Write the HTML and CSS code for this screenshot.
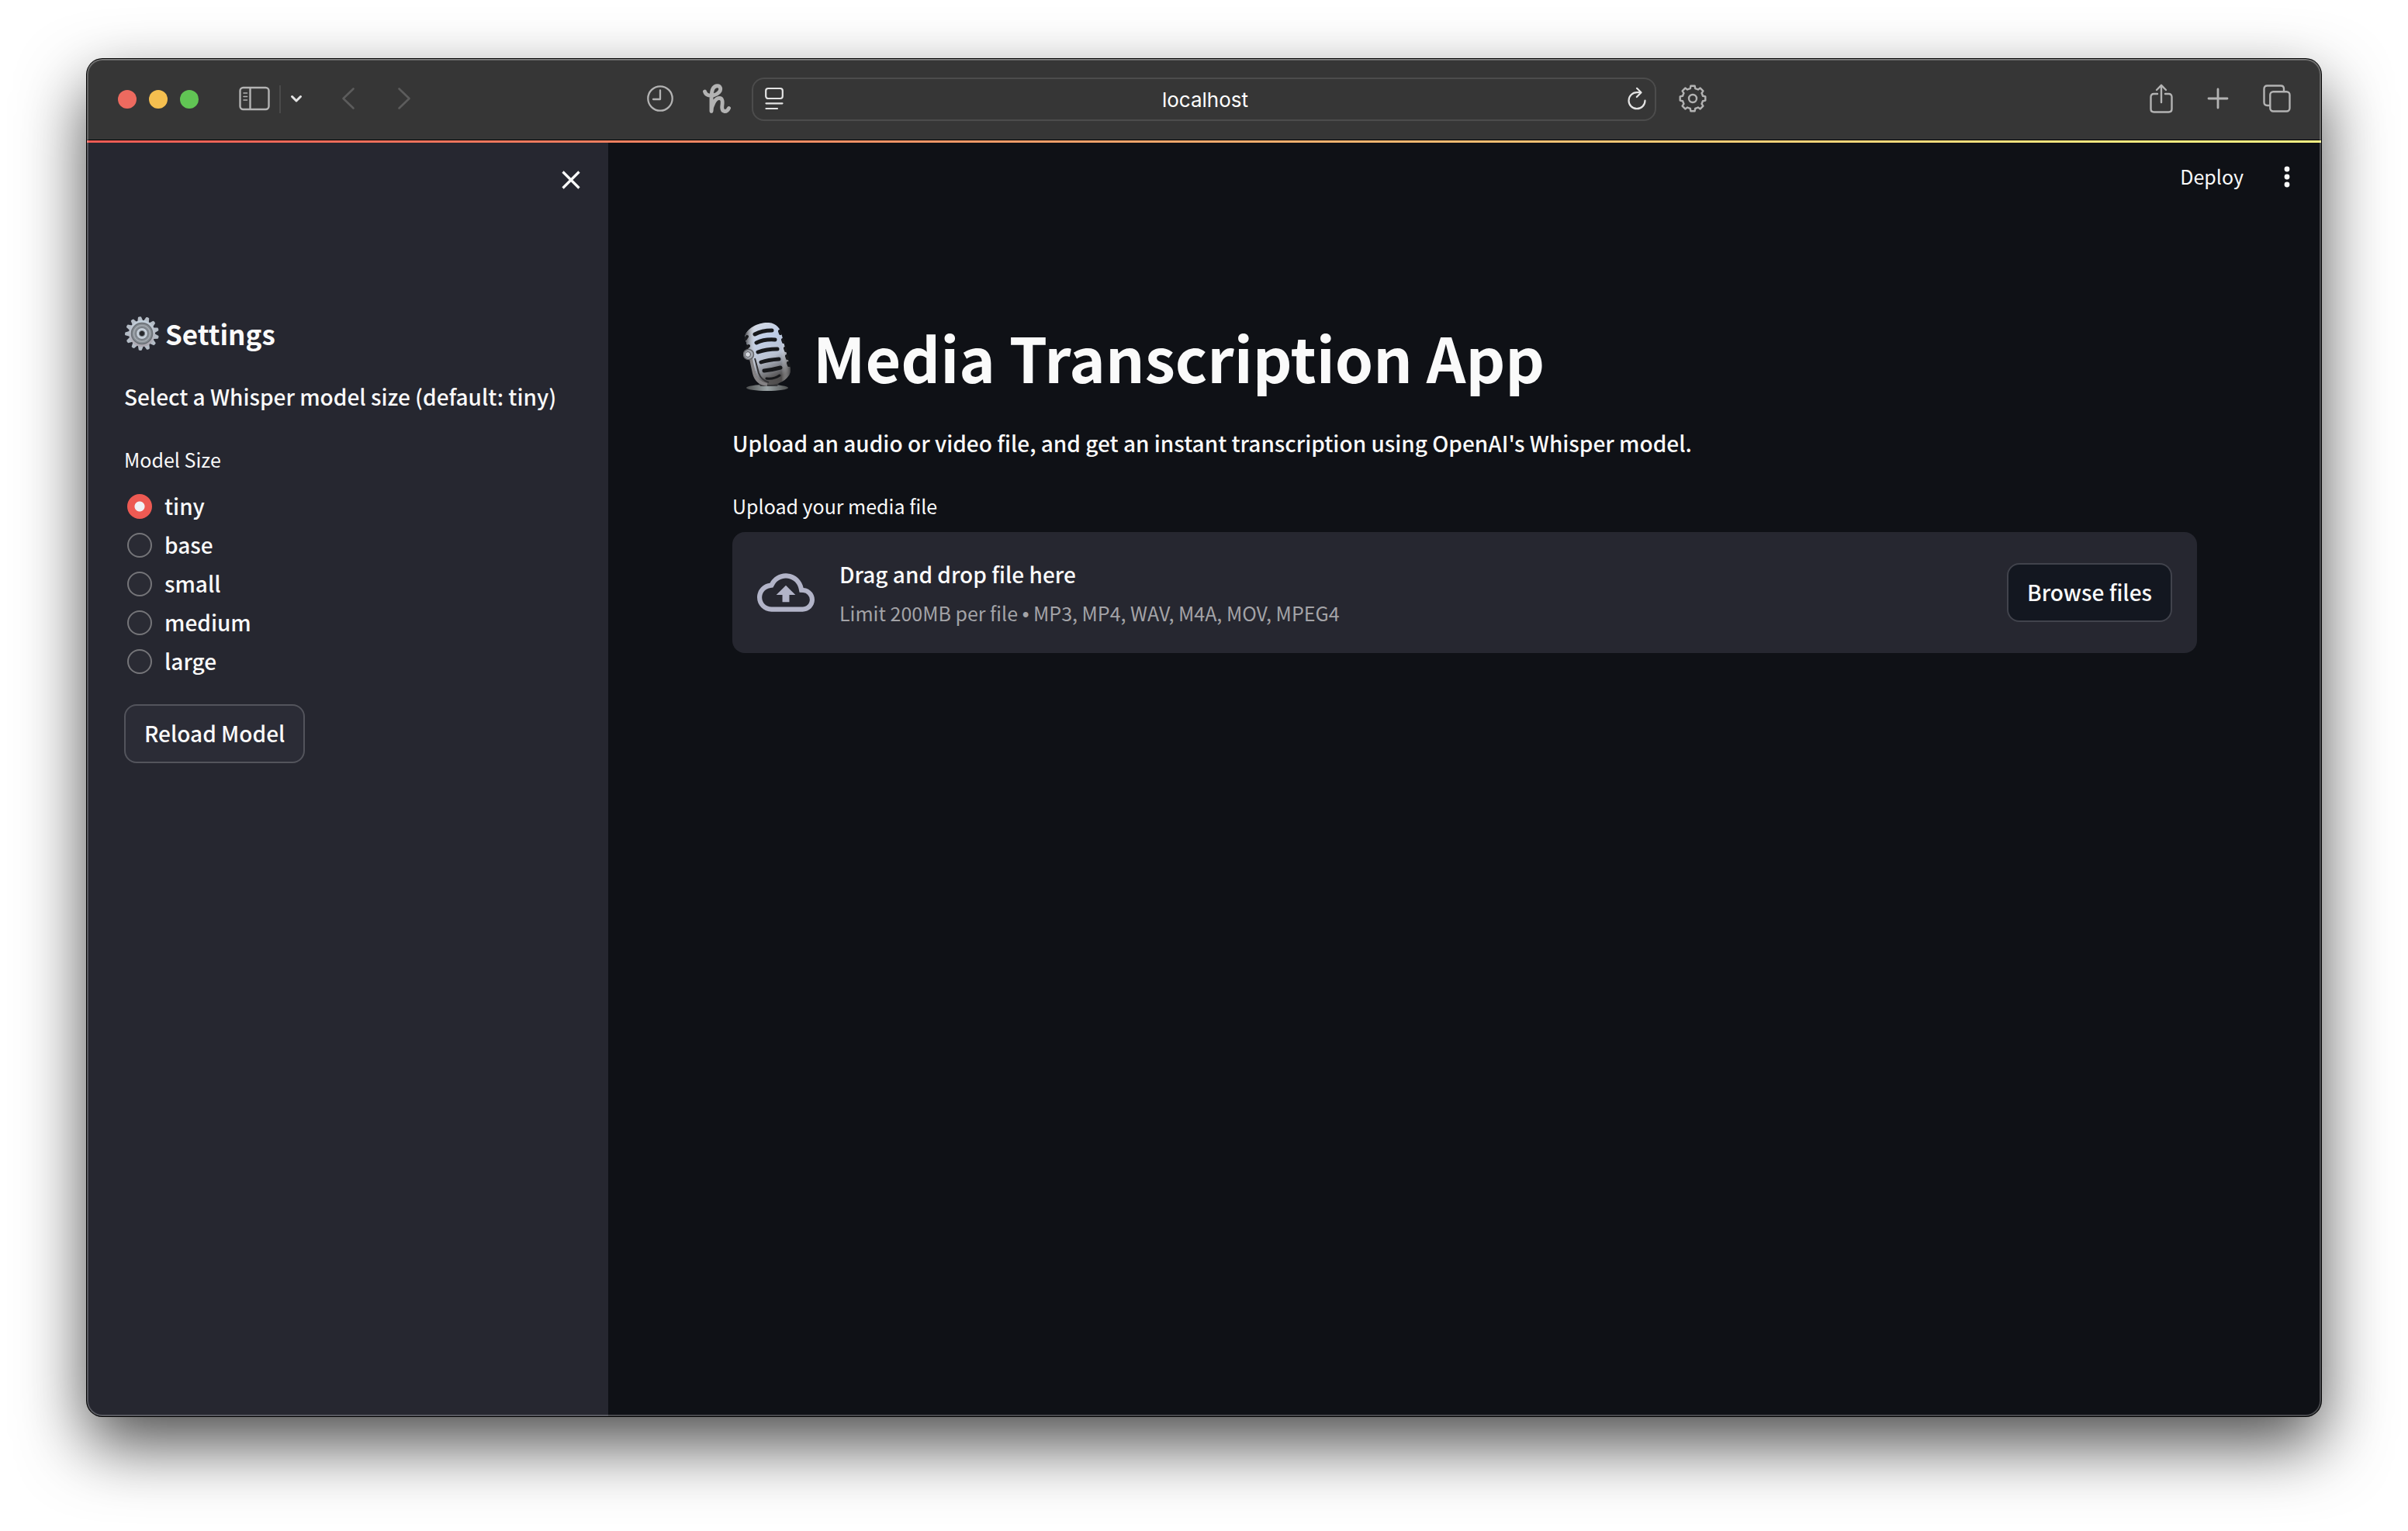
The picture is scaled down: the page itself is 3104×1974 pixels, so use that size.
FILE: index.html
```html
<!DOCTYPE html>
<html lang="en">
<head>
<meta charset="utf-8">
<title>Media Transcription App</title>
<link rel="stylesheet" href="styles.css">
</head>
<body>
<div class="window">
  <header class="toolbar">
    <div class="toolbar-start">
      <div class="lights">
        <span class="light light-close"></span>
        <span class="light light-min"></span>
        <span class="light light-max"></span>
      </div>
      <button class="tool tool-sidebar" type="button" aria-label="Show sidebar">
        <svg width="40" height="32" viewBox="0 0 40 32" fill="none" stroke="currentColor" stroke-width="2.4"><rect x="1.5" y="2" width="37" height="28" rx="4"/><path d="M14.5 2v28"/><path d="M6 9h4.500M6 13.500h4.500M6 18h4.500" stroke-width="1.600" stroke-linecap="round"/></svg>
      </button>
      <span class="divider"></span>
      <button class="tool tool-bright tool-groups" type="button" aria-label="Tab groups">
        <svg width="16" height="12" viewBox="0 0 16 12" fill="none" stroke="currentColor" stroke-width="3" stroke-linecap="round" stroke-linejoin="round"><path d="M2.500 3.500L8 9l5.500-5.500"/></svg>
      </button>
      <button class="tool tool-dim tool-back" type="button" aria-label="Back">
        <svg width="18" height="30" viewBox="0 0 18 30" fill="none" stroke="currentColor" stroke-width="2.600" stroke-linecap="round" stroke-linejoin="round"><path d="M15.500 2.500L2.500 15l13 12.500"/></svg>
      </button>
      <button class="tool tool-dim" type="button" aria-label="Forward">
        <svg width="18" height="30" viewBox="0 0 18 30" fill="none" stroke="currentColor" stroke-width="2.600" stroke-linecap="round" stroke-linejoin="round"><path d="M2.500 2.500L15.500 15l-13 12.500"/></svg>
      </button>
      <div class="extensions">
        <button class="tool" type="button" aria-label="History">
          <svg width="36" height="36" viewBox="0 0 36 36" fill="none" stroke="currentColor" stroke-width="2.300" stroke-linecap="round" stroke-linejoin="round"><circle cx="18" cy="18" r="15.700"/><path d="M18 7.500V19H9"/></svg>
        </button>
        <button class="tool" type="button" aria-label="Honey">
          <svg width="36" height="38" viewBox="0 0 36 38" fill="none" stroke="currentColor" stroke-width="4.900" stroke-linecap="round" stroke-linejoin="round"><path d="M2.500 10C4 15 9 16 14 14.800C20 13.500 23.500 9 22.500 5.500C21.500 1.500 16 2 13.500 5.500C11 9 11 14 11 20V35.500C11 28 16 18.500 21 18.500C26 18.500 25.500 24 24.800 29C24 37.500 31 37 33.500 31.500"/></svg>
        </button>
      </div>
    </div>
    <form class="address">
      <button class="tool tool-bright" type="button" aria-label="Reader">
        <svg width="24" height="30" viewBox="0 0 24 30" fill="none" stroke="currentColor" stroke-width="2.200" stroke-linecap="round"><rect x="1.200" y="2" width="21.600" height="13" rx="3"/><path d="M1.500 21.300h21M1.500 28h14.500"/></svg>
      </button>
      <input class="address-field" type="text" value="localhost" aria-label="Address">
      <button class="tool tool-bright" type="button" aria-label="Reload">
        <svg width="26" height="30" viewBox="0 0 26 30" fill="none" stroke="currentColor" stroke-width="2.200" stroke-linecap="round" stroke-linejoin="round"><path d="M18 7.200H13A10.500 10.500 0 1 0 23.500 17.700"/><path d="M13 1.800L18.500 7.200L12.800 13"/></svg>
      </button>
    </form>
    <div class="toolbar-end">
      <button class="tool" type="button" aria-label="Website settings">
        <svg width="36" height="36" viewBox="-18 -18 36 36" fill="none" stroke="currentColor" stroke-width="2.400" stroke-linejoin="round"><path d="M-3.200-13L-2.600-16.300H2.600L3.200-13Q4.700-12.500 6.900-11.500L9.700-13.400L13.400-9.700L11.500-6.900Q12.500-4.700 13-3.200L16.300-2.600V2.600L13 3.200Q12.500 4.700 11.500 6.900L13.400 9.700L9.700 13.400L6.900 11.500Q4.700 12.500 3.200 13L2.600 16.300H-2.600L-3.200 13Q-4.700 12.500-6.900 11.500L-9.700 13.400L-13.400 9.700L-11.500 6.900Q-12.500 4.700-13 3.200L-16.300 2.600V-2.600L-13-3.200Q-12.500-4.700-11.500-6.900L-13.400-9.700L-9.700-13.400L-6.900-11.500Q-4.700-12.500-3.200-13Z"/><circle r="5"/></svg>
      </button>
      <div class="window-actions">
        <button class="tool" type="button" aria-label="Share">
          <svg width="30" height="38" viewBox="0 0 30 38" fill="none" stroke="currentColor" stroke-width="2.400" stroke-linecap="round" stroke-linejoin="round"><path d="M10 13H5.500Q1.500 13 1.500 17V32.500Q1.500 36.500 5.500 36.500H24.500Q28.500 36.500 28.500 32.500V17Q28.500 13 24.500 13H20"/><path d="M15 24V2M9 8l6-6.200L21 8"/></svg>
        </button>
        <button class="tool" type="button" aria-label="New tab">
          <svg width="28" height="28" viewBox="0 0 28 28" stroke="currentColor" stroke-width="2.800" stroke-linecap="round"><path d="M14 2v24M2 14h24"/></svg>
        </button>
        <button class="tool" type="button" aria-label="Tab overview">
          <svg width="36" height="36" viewBox="0 0 36 36" fill="none" stroke="currentColor" stroke-width="2.400"><rect x="9.300" y="9.300" width="25.200" height="25.200" rx="4"/><path d="M9.300 27H5.500Q1.500 27 1.500 23V5.500Q1.500 1.500 5.500 1.500H23Q27 1.500 27 5.500V9.300"/></svg>
        </button>
      </div>
    </div>
  </header>
  <div class="decoration"></div>

  <div class="app">
    <aside class="sidebar">
      <div class="sidebar-top">
        <button class="icon-button" type="button" aria-label="Close sidebar">
          <svg width="26" height="26" viewBox="0 0 26 26" stroke="currentColor" stroke-width="3.200"><path d="M2.500 2.500l21 21M23.500 2.500l-21 21"/></svg>
        </button>
      </div>
      <div class="sidebar-body">
        <h2 class="sidebar-title">
          <svg class="gear" width="46" height="46" viewBox="-23 -23 46 46" aria-hidden="true">
            <defs>
              <linearGradient id="steel" x1="0" y1="0" x2="0" y2="1"><stop offset="0" stop-color="#c3d0dc"/><stop offset="1" stop-color="#aaa5ae"/></linearGradient>
              <path id="tooth" d="M-3.800-15L-2-21.500Q0-22.500 2-21.500L3.800-15Z"/>
            </defs>
            <g fill="#b4bcc6">
              <use href="#tooth" transform="rotate(-8)"/><use href="#tooth" transform="rotate(20)"/><use href="#tooth" transform="rotate(47)"/><use href="#tooth" transform="rotate(75)"/><use href="#tooth" transform="rotate(103)"/><use href="#tooth" transform="rotate(130)"/><use href="#tooth" transform="rotate(158)"/><use href="#tooth" transform="rotate(186)"/><use href="#tooth" transform="rotate(213)"/><use href="#tooth" transform="rotate(241)"/><use href="#tooth" transform="rotate(269)"/><use href="#tooth" transform="rotate(297)"/><use href="#tooth" transform="rotate(324)"/>
            </g>
            <circle r="17" fill="url(#steel)"/>
            <circle r="13.500" fill="#858b92" stroke="#6b7076" stroke-width="1.500"/>
            <circle r="10.500" fill="none" stroke="#a9afb5" stroke-width="1.200"/>
            <circle r="7.500" fill="#c5ced8" stroke="#70767d" stroke-width="1"/>
            <circle r="3.600" fill="#25272b" stroke="#73797f" stroke-width="1"/>
          </svg>
          <span>Settings</span>
        </h2>
        <p class="text">Select a Whisper model size (default: tiny)</p>
        <fieldset class="models">
          <legend class="label">Model Size</legend>
          <label class="option"><input class="radio" type="radio" name="model" value="tiny" checked><span class="option-text">tiny</span></label>
          <label class="option"><input class="radio" type="radio" name="model" value="base"><span class="option-text">base</span></label>
          <label class="option"><input class="radio" type="radio" name="model" value="small"><span class="option-text">small</span></label>
          <label class="option"><input class="radio" type="radio" name="model" value="medium"><span class="option-text">medium</span></label>
          <label class="option"><input class="radio" type="radio" name="model" value="large"><span class="option-text">large</span></label>
        </fieldset>
        <button class="button button-side" type="button">Reload Model</button>
      </div>
    </aside>

    <main class="main">
      <div class="app-bar">
        <button class="deploy" type="button">Deploy</button>
        <button class="icon-button" type="button" aria-label="Menu">
          <svg width="8" height="28" viewBox="0 0 8 28" fill="currentColor"><circle cx="4" cy="4" r="3.400"/><circle cx="4" cy="14" r="3.400"/><circle cx="4" cy="24" r="3.400"/></svg>
        </button>
      </div>
      <div class="content">
        <h1 class="title">
          <svg class="mic" width="62" height="90" viewBox="0 0 62 90" aria-hidden="true">
            <defs>
              <linearGradient id="chrome" x1="0" y1="0" x2="0.300" y2="1"><stop offset="0" stop-color="#d5d9df"/><stop offset="0.350" stop-color="#bccbe6"/><stop offset="0.650" stop-color="#b8c0d0"/><stop offset="1" stop-color="#4d4b4b"/></linearGradient>
              <linearGradient id="shade" x1="0" y1="0" x2="1" y2="0"><stop offset="0" stop-color="#3c3c3e"/><stop offset="0.250" stop-color="#ffffff" stop-opacity="0.100"/><stop offset="0.800" stop-color="#ffffff" stop-opacity="0"/><stop offset="1" stop-color="#3c3c3e"/></linearGradient>
              <linearGradient id="base" x1="0" y1="0" x2="1" y2="0"><stop offset="0" stop-color="#4e5050"/><stop offset="0.500" stop-color="#9aa3a5"/><stop offset="1" stop-color="#4e5050"/></linearGradient>
            </defs>
            <ellipse cx="31" cy="85" rx="27" ry="4" fill="url(#base)"/>
            <path d="M17 74Q32 86 49 73L44 83H22Z" fill="#37383a"/>
            <path d="M2 20C4 7 22 0 33 1C43 2 48 8 50 18L61 61C62 72 47 82 33 81C22 80 18 74 16 66Z" fill="url(#chrome)"/>
            <path d="M2 20C4 7 22 0 33 1C43 2 48 8 50 18L61 61C62 72 47 82 33 81C22 80 18 74 16 66Z" fill="url(#shade)"/>
            <g fill="none" stroke="#17181b" stroke-width="5" stroke-linecap="round">
              <path d="M15 16Q24 11 37 11M17 27Q27 22 41 23M19 39Q30 35 44 35M23 52Q32 49 46 48M27 63Q37 62 48 59"/>
              <path d="M3 22l2-3M47 12l1 3M51 23l1 3M54 34l1 3M56 44l1 3M58 53l1 3M5 33l2-2" stroke-width="4"/>
              <path d="M30 73Q40 74 47 69" stroke-width="3"/>
            </g>
            <path d="M9 43L14 66Q17 79 31 81" fill="none" stroke="#848284" stroke-width="4"/>
            <path d="M15 47L20 66Q23 75 33 78" fill="none" stroke="#343437" stroke-width="2"/>
            <circle cx="7" cy="42" r="6.500" fill="#a9adb5" stroke="#65666a" stroke-width="1.500"/>
            <circle cx="6" cy="42" r="3.500" fill="#d4d8de" stroke="#55565b"/>
          </svg>
          <span>Media Transcription App</span>
        </h1>
        <p class="text">Upload an audio or video file, and get an instant transcription using OpenAI's Whisper model.</p>
        <section class="uploader" aria-labelledby="upload-label">
          <div class="label" id="upload-label">Upload your media file</div>
          <div class="dropzone">
            <svg class="cloud" width="74" height="74" viewBox="0 0 24 24" fill="currentColor" aria-hidden="true"><path d="M19.350 10.040C18.670 6.590 15.640 4 12 4 9.110 4 6.600 5.640 5.350 8.040 2.340 8.360 0 10.910 0 14c0 3.310 2.690 6 6 6h13c2.760 0 5-2.240 5-5 0-2.640-2.050-4.780-4.650-4.960zM19 18H6c-2.210 0-4-1.790-4-4 0-2.050 1.530-3.760 3.560-3.970l1.070-.110.500-.950C8.080 7.140 9.940 6 12 6c2.620 0 4.880 1.860 5.390 4.430l.300 1.500 1.530.110A2.980 2.980 0 0 1 22 15c0 1.650-1.350 3-3 3zM8 13h2.550v3h2.900v-3H16l-4-4z"/></svg>
            <div class="drop-copy">
              <span class="text">Drag and drop file here</span>
              <small class="hint">Limit 200MB per file <span class="bullet">•</span> MP3, MP4, WAV, M4A, MOV, MPEG4</small>
            </div>
            <button class="button" type="button">Browse files</button>
          </div>
        </section>
      </div>
    </main>
  </div>
</div>
</body>
</html>
```
FILE: styles.css
```css
* {
  box-sizing: border-box;
}

body {
  display: flex;
  min-height: 100vh;
  margin: 0;
  padding: 76px 112px 148px;
  background: #fff;
  color: #fafafa;
  font-family: "Noto Sans CJK SC", "Noto Sans", sans-serif;
  font-size: 28px;
  font-weight: 500;
  line-height: 48px;
}

h1, h2, p {
  margin: 0;
}

button, input {
  font: inherit;
  color: inherit;
}

button {
  display: flex;
  align-items: center;
  justify-content: center;
  padding: 0;
  border: 0;
  background: none;
}

svg {
  display: block;
  flex: none;
}

/* Browser window */

.window {
  position: relative;
  display: flex;
  flex: 1;
  flex-direction: column;
  min-width: 0;
  border-radius: 20px;
  background: #0f1116;
  box-shadow: 0 0 0 1px #000, 0 36px 86px rgba(0, 0, 0, 0.7);
  overflow: clip;
}

/* light rim drawn over the window's edge */
.window::after {
  content: "";
  position: absolute;
  inset: 0;
  border-radius: 20px;
  box-shadow: inset 0 1px 0 rgba(255, 255, 255, 0.2), inset 0 0 0 2px rgba(255, 255, 255, 0.24);
  pointer-events: none;
}

.toolbar {
  display: grid;
  grid-template-columns: minmax(0, 595fr) minmax(0, 810fr) minmax(0, 595fr);
  align-items: center;
  height: 104px;
  background: #363636;
}

.toolbar-start {
  display: flex;
  align-items: center;
  padding: 0 27px 0 40px;
}

.lights {
  display: flex;
  gap: 16px;
}

.light {
  width: 24px;
  height: 24px;
  border-radius: 50%;
}

.light-close { background: #ed6a5f; }
.light-min { background: #f5bf4f; }
.light-max { background: #61c554; }

.tool {
  padding-bottom: 2px;
  color: #b3b3b3;
}

.tool-bright { color: #e4e4e4; }
.tool-dim { color: #5c5c5c; }
.tool-sidebar { margin-left: 52px; }
.tool-groups { margin-left: 12px; }
.tool-back { margin: 0 54px 0 50px; }

.divider {
  width: 2px;
  height: 36px;
  margin-left: 12px;
  background: #4a4a4a;
}

.extensions {
  display: flex;
  align-items: center;
  gap: 37px;
  margin-left: auto;
}

.address {
  display: flex;
  align-items: center;
  height: 56px;
  padding: 0 10px 0 15px;
  border: 2px solid #4c4c4c;
  border-radius: 16px;
}

.address-field {
  flex: 1;
  min-width: 0;
  padding: 2px 0 0;
  border: 0;
  outline: 0;
  background: none;
  color: #fff;
  font-family: Inter, sans-serif;
  font-size: 26px;
  font-weight: 400;
  line-height: 32px;
  text-align: center;
}

.toolbar-end {
  display: flex;
  align-items: center;
  justify-content: space-between;
  padding: 0 39px 0 29px;
}

.window-actions {
  display: flex;
  align-items: center;
  gap: 44px;
}

.decoration {
  height: 4px;
  border-top: 1px solid #000;
  background: linear-gradient(90deg, #ee5b55, #fdf884);
}

/* App */

.app {
  display: flex;
  flex: 1;
}

.sidebar {
  flex: none;
  width: 672px;
  border-bottom-left-radius: 20px;
  background: #262730;
}

.sidebar-top {
  display: flex;
  align-items: center;
  justify-content: flex-end;
  height: 96px;
  padding: 0 24px;
}

.icon-button {
  width: 48px;
  height: 48px;
}

.sidebar-body {
  padding: 126px 48px 48px;
}

.sidebar-title {
  display: flex;
  align-items: center;
  gap: 7px;
  margin-bottom: 33px;
  font-size: 35px;
  font-weight: 700;
}

.label {
  padding: 0;
  font-size: 25px;
  font-weight: 400;
  line-height: 40px;
}

.models {
  margin: 37px 0 30px;
  padding: 0;
  border: 0;
}

.models .label {
  margin-bottom: 16px;
}

.option {
  display: flex;
  align-items: center;
  gap: 16px;
  height: 50px;
  padding-left: 4px;
}

.option-text {
  padding-bottom: 3px;
}

.radio {
  appearance: none;
  width: 32px;
  height: 32px;
  margin: 0;
  border: 2px solid #757579;
  border-radius: 50%;
  background: #2a2b34;
}

.radio:checked {
  border-color: #ed5a53;
  background: radial-gradient(circle, #f0f2f6 6px, #ed5a53 7px);
}

.button {
  height: 76px;
  padding: 0 24px 3px;
  border: 2px solid #41434c;
  border-radius: 16px;
  background: #131720;
  white-space: nowrap;
}

.button-side {
  border-color: #53545c;
  background: #2b2c36;
}

.main {
  flex: 1;
  min-width: 0;
}

.app-bar {
  display: flex;
  align-items: center;
  justify-content: flex-end;
  gap: 32px;
  height: 88px;
  padding-right: 20px;
}

.deploy {
  padding-bottom: 2px;
  font-size: 25px;
  font-weight: 400;
  line-height: 40px;
}

.content {
  padding: 134px 160px 80px;
}

.title {
  display: flex;
  align-items: center;
  gap: 28px;
  margin-bottom: 33px;
  padding-left: 14px;
  font-size: 79px;
  font-weight: 700;
  line-height: 108px;
}

.uploader {
  margin-top: 37px;
}

.dropzone {
  display: flex;
  align-items: center;
  gap: 32px;
  min-height: 156px;
  margin-top: 14px;
  padding: 24px 32px;
  border-radius: 16px;
  background: #262730;
}

.cloud {
  color: #b2b4c8;
}

.drop-copy {
  display: flex;
  flex: 1;
  flex-direction: column;
  gap: 6px;
}

.hint {
  color: #a3a3a7;
  font-size: 25px;
  font-weight: 400;
  line-height: 40px;
}

.bullet {
  font-family: "Liberation Sans", sans-serif;
}
```
